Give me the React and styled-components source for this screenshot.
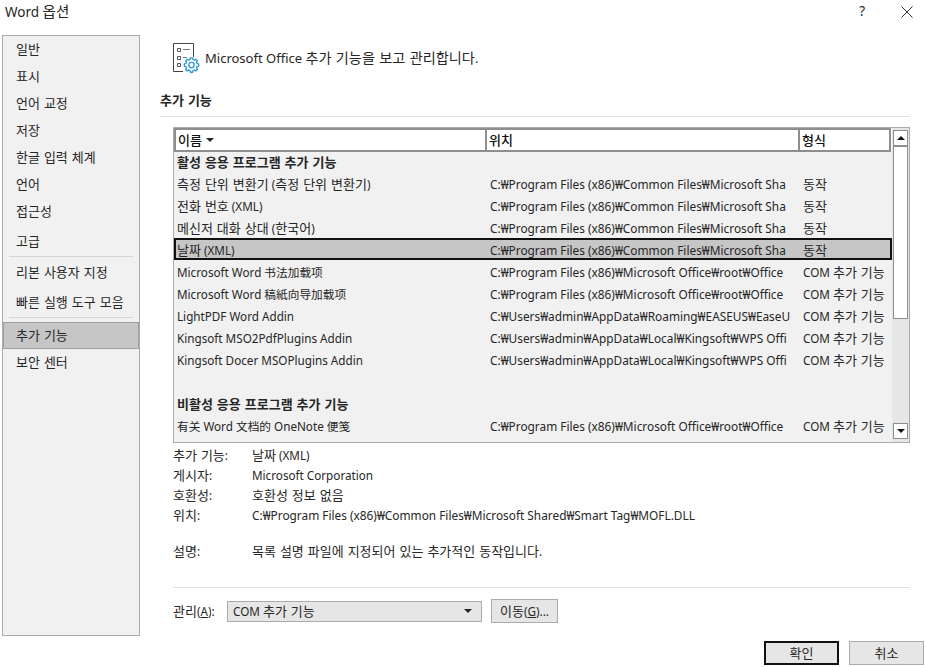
import React from 'react';
import styled, { createGlobalStyle } from 'styled-components';

const GlobalStyle = createGlobalStyle`
  html, body {
    margin: 0;
    padding: 0;
    background: #fff;
  }
  body {
    font-family: "Noto Sans", "Noto Sans CJK KR", sans-serif;
    font-size: 11.7px;
    color: #262626;
  }
`;

const Dialog = styled.div`
  width: 926px;
  height: 667px;
  overflow: hidden;
  background: #fff;
  display: flex;
  flex-direction: column;
`;

const TitleBar = styled.div`
  height: 35px;
  flex: none;
  display: flex;
  justify-content: space-between;
  padding: 2px 0 0 5px;
  box-sizing: border-box;
`;

const TitleText = styled.div`
  font-size: 13.5px;
  line-height: 18px;
`;

const WindowButtons = styled.div`
  display: flex;
  align-items: flex-start;
  gap: 36px;
  padding: 0 13px 0 0;
`;

const CloseIcon = styled.svg`
  margin-top: 4px;
`;

const Body = styled.div`
  flex: 1;
  display: flex;
  padding-left: 2px;
  gap: 20px;
  min-height: 0;
`;

const Sidebar = styled.nav`
  width: 138px;
  height: 601px;
  box-sizing: border-box;
  flex: none;
  background: #f1f1f1;
  border: 1px solid #ababab;
`;

const NavItem = styled.div`
  height: 27px;
  line-height: 26px;
  box-sizing: border-box;
  padding-left: 13px;
  ${p => p.$selected && 'background: #c6c6c6; border: 1px solid #a0a0a0; padding-left: 12px; line-height: 24px;'}
  ${p => p.$gapTop && `margin-top: ${p.$gapTop}px;`}
`;

const NavRule = styled.div`
  height: 1px;
  background: #d6d6d6;
  margin: ${p => p.$margin};
`;

const Main = styled.main`
  flex: 1;
  display: flex;
  flex-direction: column;
  min-width: 0;
`;

const Banner = styled.div`
  display: flex;
  align-items: center;
  height: 32px;
  margin: 7px 0 0 13px;
  gap: 3px;
  font-size: 13px;
`;

const BannerText = styled.span`
  margin-bottom: 2px;
`;

const SectionTitle = styled.div`
  margin-top: 17px;
  height: 20px;
  line-height: 18px;
  font-weight: 600;
`;

const Rule = styled.div`
  height: 1px;
  background: #e1e1e1;
  margin: ${p => p.$margin};
`;

const ListBox = styled.div`
  margin: 10px 0 0 13px;
  width: 737px;
  height: 316px;
  flex: none;
  box-sizing: border-box;
  border: 1px solid #ababab;
  display: flex;
  overflow: hidden;
`;

const ListArea = styled.div`
  width: 718px;
  flex: none;
  background: #f1f1f1;
`;

const HeaderRow = styled.div`
  display: grid;
  grid-template-columns: 313px 313px 91px;
  height: 22px;
  background: #fff;
`;

const HeaderCell = styled.div`
  box-sizing: border-box;
  border: 2px solid #8e8e8e;
  border-left-width: ${p => (p.$first ? 2 : 0)}px;
  padding: 0 0 1px 2px;
  display: flex;
  align-items: center;
  gap: 4px;
  color: #111;
  font-weight: 500;
`;

const SortCaret = styled.span`
  width: 0;
  height: 0;
  border-left: 4px solid transparent;
  border-right: 4px solid transparent;
  border-top: 4px solid #262626;
  margin-top: 1px;
`;

const Row = styled.div`
  display: grid;
  grid-template-columns: 313px 313px 92px;
  height: 22px;
  line-height: 23px;
  box-sizing: border-box;
  padding-top: 1px;
  ${p => p.$selected && 'background: #c6c6c6; outline: 2px solid #111; outline-offset: -2px;'}
`;

const GroupRow = styled.div`
  height: 22px;
  line-height: 23px;
  padding-top: 1px;
  box-sizing: border-box;
  padding-left: 3px;
  font-weight: 600;
`;

const Cell = styled.div`
  white-space: nowrap;
  padding-left: 3px;
  ${p => p.$path && 'font-size: 11.85px;'}
`;

const ScrollBar = styled.div`
  flex: 1;
  background: #e6e6e6;
  display: flex;
  flex-direction: column;
  padding: 2px 0 0 1px;
`;

const ScrollArrow = styled.div`
  width: 15px;
  height: 16px;
  box-sizing: border-box;
  background: #fff;
  border: 1px solid #8e8e8e;
  display: flex;
  align-items: center;
  justify-content: center;
  margin-top: ${p => (p.$bottom ? 'auto' : 0)};
  margin-bottom: ${p => (p.$bottom ? '3px' : 0)};
`;

const ArrowGlyph = styled.span`
  width: 0;
  height: 0;
  border-left: 4px solid transparent;
  border-right: 4px solid transparent;
  ${p => (p.$up ? 'border-bottom: 4px solid #111;' : 'border-top: 4px solid #111;')}
`;

const ScrollThumb = styled.div`
  width: 15px;
  height: 173px;
  box-sizing: border-box;
  background: #fff;
  border: 1px solid #8e8e8e;
`;

const Details = styled.div`
  margin: 2px 0 0 13px;
  display: grid;
  grid-template-columns: 79px 1fr;
  grid-template-rows: repeat(4, 20px) 16px 20px;
  line-height: 20px;
`;

const DetailGap = styled.div`
  grid-column: 1 / 3;
`;

const PathValue = styled.span`
  font-size: 11.85px;
`;

const ManageRow = styled.div`
  margin-left: 13px;
  display: flex;
  align-items: center;
  height: 24px;
`;

const ManageLabel = styled.label`
  width: 54px;
  flex: none;
  padding-bottom: 1px;
`;

const Select = styled.div`
  width: 255px;
  height: 21px;
  box-sizing: border-box;
  background: #e6e6e6;
  border: 1px solid #ababab;
  display: flex;
  align-items: center;
  justify-content: space-between;
  padding: 0 9px 2px 5px;
  margin-right: 9px;
`;

const Button = styled.button`
  font: inherit;
  color: inherit;
  padding: 0 0 2px;
  box-sizing: border-box;
  background: #e6e6e6;
  border: ${p => (p.$primary ? '2px solid #111' : '1px solid #ababab')};
  width: ${p => p.$width}px;
  height: ${p => p.$height}px;
`;

const Footer = styled.div`
  display: flex;
  justify-content: flex-end;
  gap: 10px;
  padding-right: 2px;
  margin-top: 18px;
`;

const Key = styled.span`
  text-decoration: underline;
`;

const KoSpan = styled.span`
  font-size: ${p => p.$size || 13}px;
  word-spacing: 0.6px;
`;

// 한글만 13px로 키워서 맑은 고딕 폭에 맞춘다
function Ko({ children, size }) {
  const parts = children.split(/([가-힣]+(?: [가-힣]+)*)/);
  return parts.map((part, i) =>
    i % 2 ? <KoSpan key={i} $size={size}>{part}</KoSpan> : part
  );
}

function AddinIcon() {
  return (
    <svg width="29" height="30" viewBox="0 0 29 30" fill="none">
      <path d="M10 28.5H.5V.5H20.5V14" stroke="#444" />
      <path d="M4.5 5.5h3v3h-3zM4.5 13.5h3v3h-3zM4.5 20.5h3v3h-3z" stroke="#555" />
      <path d="M10 6.5h7M10 14.5h4" stroke="#777" />
      <g transform="translate(18.5 22) scale(.75) translate(-19 -22)">
        <path
          d="M17.5 12.5h3l.6 2.2 1.6.7 2-1.1 2.1 2.1-1.1 2 .7 1.6 2.1.6v3l-2.1.6-.7 1.6 1.1 2-2.1 2.1-2-1.1-1.6.7-.6 2.1h-3l-.6-2.1-1.6-.7-2 1.1-2.1-2.1 1.1-2-.7-1.6-2.1-.6v-3l2.1-.6.7-1.6-1.1-2 2.1-2.1 2 1.1 1.6-.7z"
          fill="#fff"
          stroke="#2f9bd8"
          strokeWidth="1.8"
        />
        <circle cx="19" cy="22" r="3.6" stroke="#2f9bd8" strokeWidth="1.8" />
      </g>
    </svg>
  );
}

const navGroups = [
  { label: '일반' },
  { label: '표시' },
  { label: '언어 교정' },
  { label: '저장' },
  { label: '한글 입력 체계' },
  { label: '언어' },
  { label: '접근성' },
  { label: '고급', gapTop: 3 },
];

const sharedPath = 'C:₩Program Files (x86)₩Common Files₩Microsoft Sha';
const officePath = 'C:₩Program Files (x86)₩Microsoft Office₩root₩Office';
const wpsPath = 'C:₩Users₩admin₩AppData₩Local₩Kingsoft₩WPS Offi';

const activeRows = [
  ['측정 단위 변환기 (측정 단위 변환기)', sharedPath, '동작'],
  ['전화 번호 (XML)', sharedPath, '동작'],
  ['메신저 대화 상대 (한국어)', sharedPath, '동작'],
  ['날짜 (XML)', sharedPath, '동작', true],
  ['Microsoft Word 书法加载项', officePath, 'COM 추가 기능'],
  ['Microsoft Word 稿紙向导加载项', officePath, 'COM 추가 기능'],
  ['LightPDF Word Addin', 'C:₩Users₩admin₩AppData₩Roaming₩EASEUS₩EaseU', 'COM 추가 기능'],
  ['Kingsoft MSO2PdfPlugins Addin', wpsPath, 'COM 추가 기능'],
  ['Kingsoft Docer MSOPlugins Addin', wpsPath, 'COM 추가 기능'],
];

const details = [
  ['추가 기능:', '날짜 (XML)'],
  ['게시자:', 'Microsoft Corporation'],
  ['호환성:', '호환성 정보 없음'],
];

export default function App() {
  return (
    <Dialog>
      <GlobalStyle />
      <TitleBar>
        <TitleText>Word <Ko size={14.5}>옵션</Ko></TitleText>
        <WindowButtons>
          <TitleText>?</TitleText>
          <CloseIcon width="12" height="12" viewBox="0 0 12 12">
            <path d="M.5.5l11 11M11.5.5l-11 11" stroke="#333" />
          </CloseIcon>
        </WindowButtons>
      </TitleBar>
      <Body>
        <Sidebar>
          {navGroups.map(item => (
            <NavItem key={item.label} $gapTop={item.gapTop}><Ko>{item.label}</Ko></NavItem>
          ))}
          <NavRule $margin="1px 6px 2px" />
          <NavItem><Ko>리본 사용자 지정</Ko></NavItem>
          <NavItem $gapTop={3}><Ko>빠른 실행 도구 모음</Ko></NavItem>
          <NavRule $margin="1px 6px 4px" />
          <NavItem $selected><Ko>추가 기능</Ko></NavItem>
          <NavItem><Ko>보안 센터</Ko></NavItem>
        </Sidebar>
        <Main>
          <Banner>
            <AddinIcon />
            <BannerText>Microsoft Office <Ko size={14.2}>추가 기능을 보고 관리합니다</Ko>.</BannerText>
          </Banner>
          <SectionTitle><Ko>추가 기능</Ko></SectionTitle>
          <Rule $margin="5px 16px 0 0" />
          <ListBox>
            <ListArea>
              <HeaderRow>
                <HeaderCell $first><span><Ko>이름</Ko></span><SortCaret /></HeaderCell>
                <HeaderCell><span><Ko>위치</Ko></span></HeaderCell>
                <HeaderCell><span><Ko>형식</Ko></span></HeaderCell>
              </HeaderRow>
              <GroupRow><Ko>활성 응용 프로그램 추가 기능</Ko></GroupRow>
              {activeRows.map(([name, path, type, selected]) => (
                <Row key={name} $selected={selected}>
                  <Cell><Ko>{name}</Ko></Cell>
                  <Cell $path>{path}</Cell>
                  <Cell><Ko>{type}</Ko></Cell>
                </Row>
              ))}
              <Row />
              <GroupRow><Ko>비활성 응용 프로그램 추가 기능</Ko></GroupRow>
              <Row>
                <Cell>有关 Word 文档的 OneNote 便笺</Cell>
                <Cell $path>{officePath}</Cell>
                <Cell><Ko>COM 추가 기능</Ko></Cell>
              </Row>
            </ListArea>
            <ScrollBar>
              <ScrollArrow><ArrowGlyph $up /></ScrollArrow>
              <ScrollThumb />
              <ScrollArrow $bottom><ArrowGlyph /></ScrollArrow>
            </ScrollBar>
          </ListBox>
          <Details>
            {details.map(([label, value]) => (
              <React.Fragment key={label}>
                <span><Ko>{label}</Ko></span>
                <span><Ko>{value}</Ko></span>
              </React.Fragment>
            ))}
            <span><Ko>위치:</Ko></span>
            <PathValue>C:₩Program Files (x86)₩Common Files₩Microsoft Shared₩Smart Tag₩MOFL.DLL</PathValue>
            <DetailGap />
            <span><Ko>설명:</Ko></span>
            <span><Ko>목록 설명 파일에 지정되어 있는 추가적인 동작입니다</Ko>.</span>
          </Details>
          <Rule $margin="26px 16px 11px 13px" />
          <ManageRow>
            <ManageLabel><Ko>관리</Ko>(<Key>A</Key>):</ManageLabel>
            <Select>
              <span><Ko>COM 추가 기능</Ko></span>
              <SortCaret />
            </Select>
            <Button $width={67} $height={24}><Ko>이동</Ko>(<Key>G</Key>)...</Button>
          </ManageRow>
          <Footer>
            <Button $primary $width={75} $height={24}><Ko>확인</Ko></Button>
            <Button $width={75} $height={24}><Ko>취소</Ko></Button>
          </Footer>
        </Main>
      </Body>
    </Dialog>
  );
}
